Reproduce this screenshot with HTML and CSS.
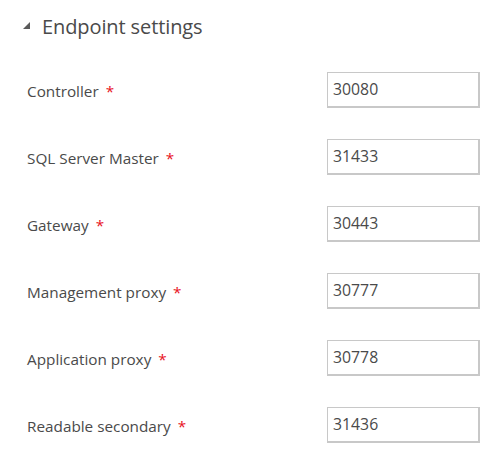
FILE: index.html
```html
<!DOCTYPE html>
<html>
<head>
<meta charset="utf-8">
<link rel="stylesheet" href="styles.css">
</head>
<body>
<div class="section">
  <div class="header">
    <svg class="caret" width="8" height="8" viewBox="0 0 8 8"><polygon points="7,0 7,7 0,7" fill="#5a5a5a"/></svg>
    <span class="title">Endpoint settings</span>
  </div>
  <div class="rows">
    <div class="row"><span class="label">Controller <span class="req">*</span></span><div class="input">30080</div></div>
    <div class="row"><span class="label">SQL Server Master <span class="req">*</span></span><div class="input">31433</div></div>
    <div class="row"><span class="label">Gateway <span class="req">*</span></span><div class="input">30443</div></div>
    <div class="row"><span class="label">Management proxy <span class="req">*</span></span><div class="input">30777</div></div>
    <div class="row"><span class="label">Application proxy <span class="req">*</span></span><div class="input">30778</div></div>
    <div class="row"><span class="label">Readable secondary <span class="req">*</span></span><div class="input">31436</div></div>
  </div>
</div>
</body>
</html>
```
FILE: styles.css
```css
html, body {
  margin: 0;
  padding: 0;
  background: #fff;
}
body {
  font-family: "Open Sans", "Noto Sans", sans-serif;
  color: #444;
}
.section {
  padding-left: 23px;
}
.header {
  display: flex;
  align-items: center;
  height: 52px;
  margin-bottom: 20px;
}
.caret {
  display: block;
  margin-top: -1px;
}
.title {
  margin-left: 11px;
  font-size: 20px;
  color: #4a4a4a;
  letter-spacing: -0.1px;
}
.rows {
  display: flex;
  flex-direction: column;
  gap: 31px;
  padding-left: 4px;
}
.row {
  display: grid;
  grid-template-columns: 300px 153px;
  align-items: center;
  height: 36px;
}
.label {
  font-size: 15.3px;
  color: #4a4a4a;
  padding-top: 2px;
}
.req {
  color: #e81123;
  margin-left: 3px;
}
.input {
  box-sizing: border-box;
  height: 36px;
  border: 1px solid #c8c8c8;
  border-right-width: 2px;
  border-bottom-width: 2px;
  padding-left: 5px;
  font-size: 15.8px;
  line-height: 33px;
  color: #4a4a4a;
}
```
